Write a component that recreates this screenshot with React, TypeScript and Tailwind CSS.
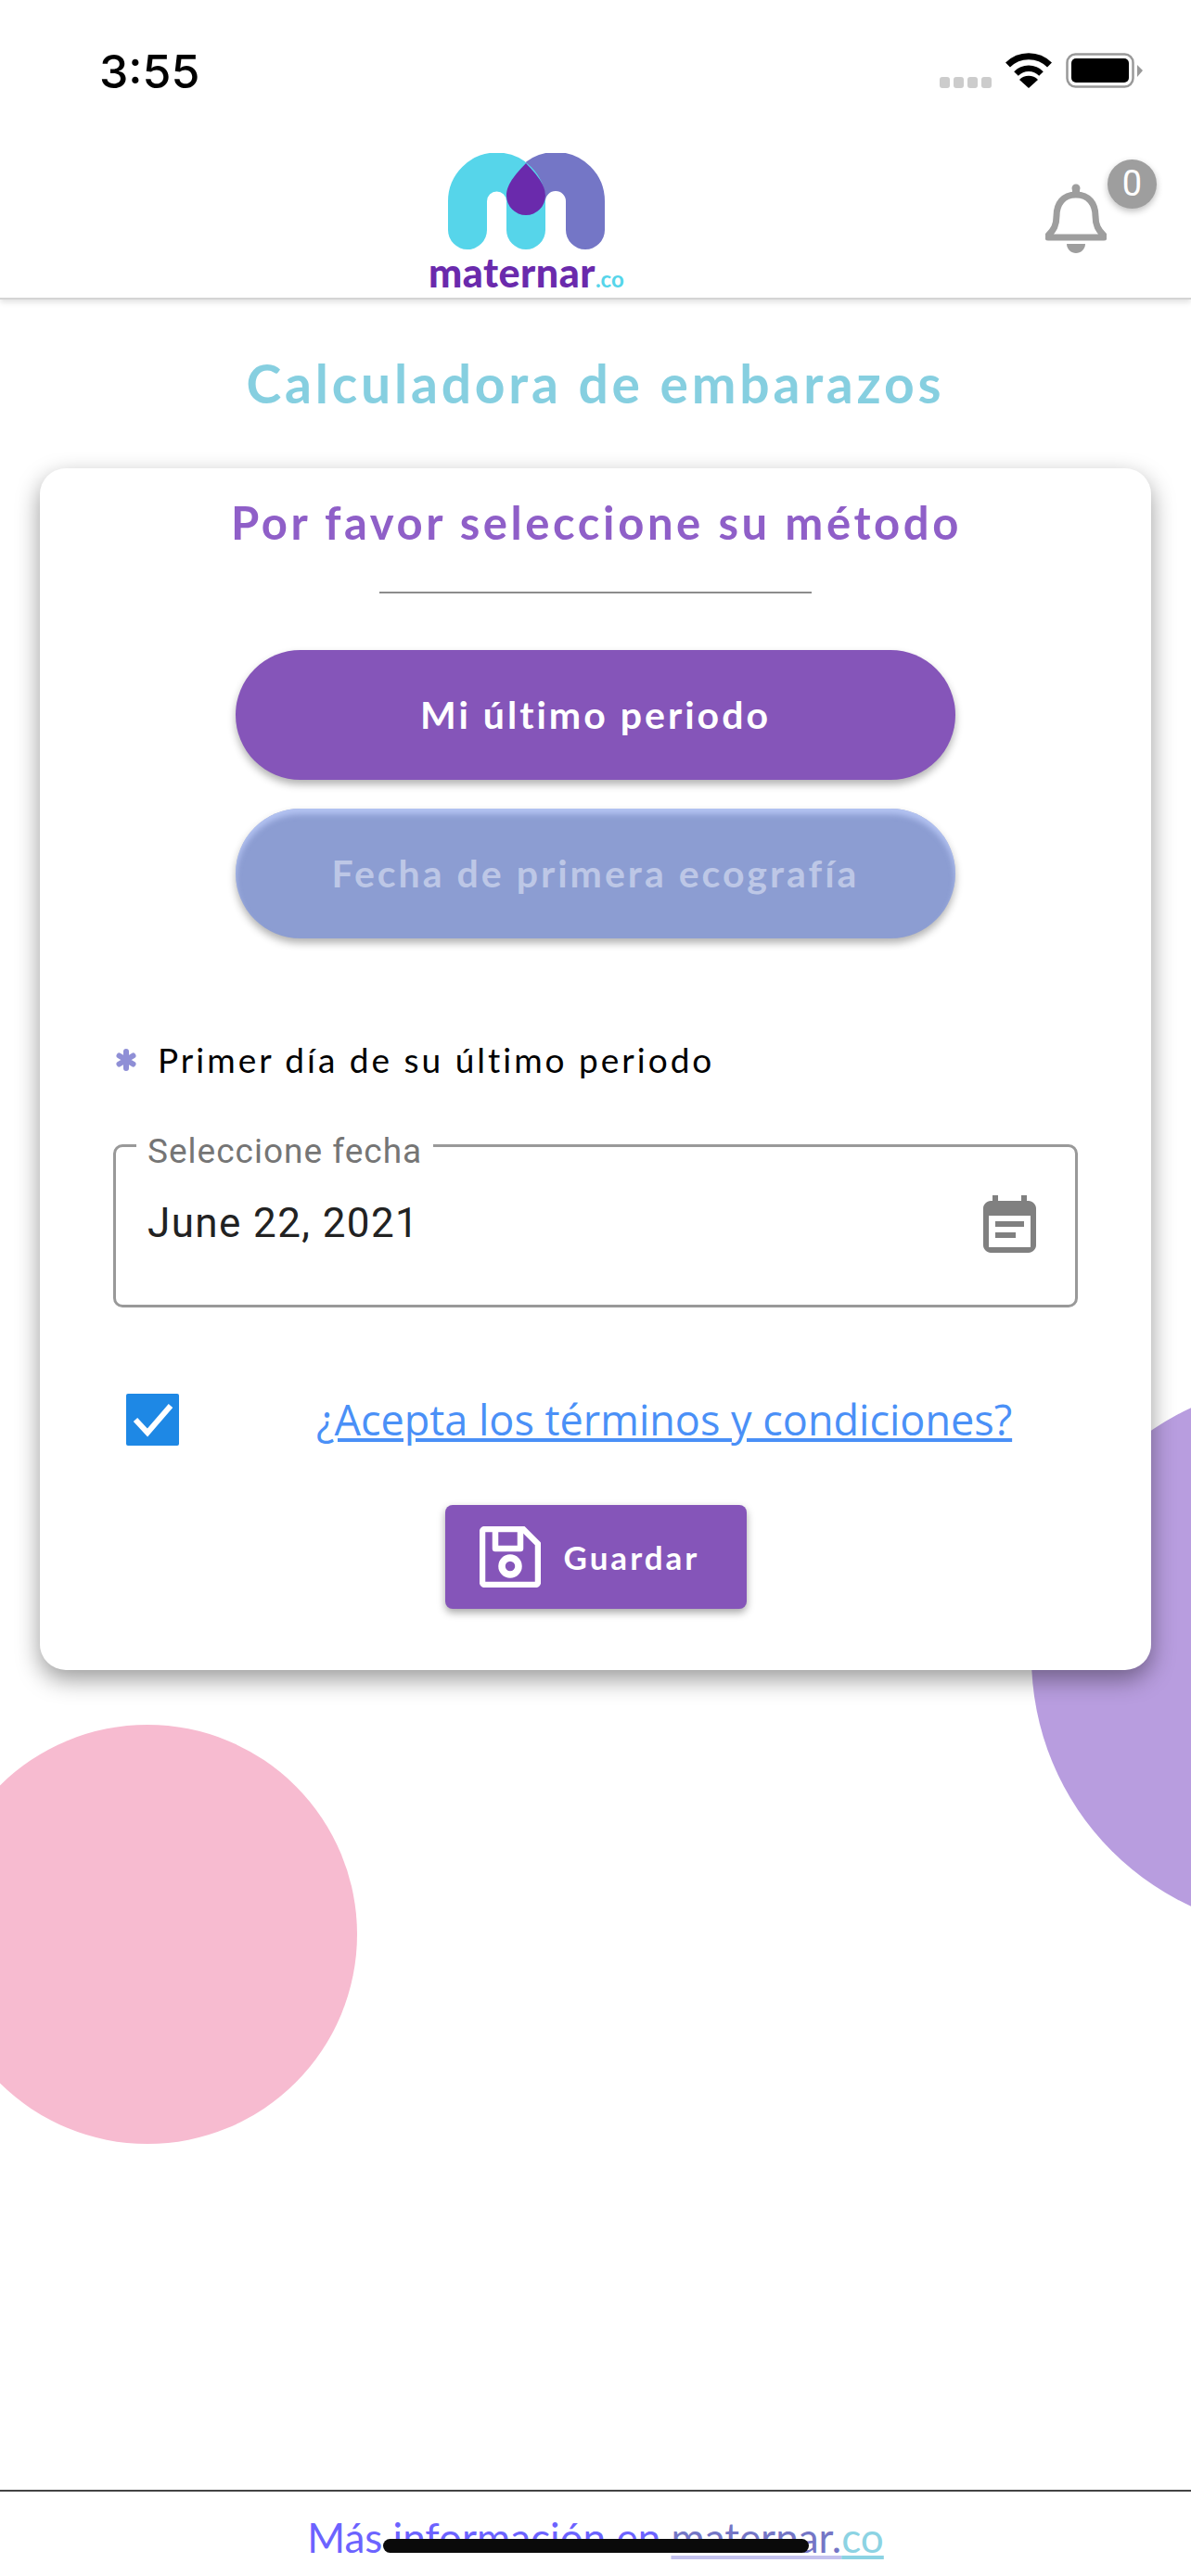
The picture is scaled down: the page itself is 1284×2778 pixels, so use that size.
import React from 'react';

const StatusBar: React.FC = () => (
  <div className="flex h-[148px] shrink-0 items-start justify-between pl-[107px] pr-[52px] pt-[49px]">
    <span className="font-['Inter'] text-[50px] leading-[56px] font-medium text-black">3:55</span>
    <div className="mt-[8px] flex items-start">
      <div className="mt-[26px] mr-[15px] flex gap-[4px]">
        <span className="h-[12px] w-[11px] rounded-[3px] bg-[#cccccc]" />
        <span className="h-[12px] w-[11px] rounded-[3px] bg-[#cccccc]" />
        <span className="h-[12px] w-[11px] rounded-[3px] bg-[#cccccc]" />
        <span className="h-[12px] w-[11px] rounded-[3px] bg-[#cccccc]" />
      </div>
      <svg className="mr-[15px] h-[38px] w-[50px]" viewBox="0 0 50 38">
        <path d="M25 38 L15 29 A14 14 0 0 1 35 29 Z" fill="#000" />
        <path d="M11.5 22.5 A19 19 0 0 1 38.5 22.5" fill="none" stroke="#000" strokeWidth="6.5" />
        <path d="M2.5 13 A32 32 0 0 1 47.5 13" fill="none" stroke="#000" strokeWidth="7" />
      </svg>
      <svg className="h-[38px] w-[83px]" viewBox="0 0 83 38">
        <rect x="1.5" y="1.5" width="71" height="35" rx="9" fill="none" stroke="#999" strokeWidth="2.5" />
        <rect x="6" y="6" width="62" height="26" rx="5" fill="#000" />
        <path d="M77 13 L83 19 L77 26 Z" fill="#999" />
      </svg>
    </div>
  </div>
);

const Logo: React.FC = () => (
  <div className="flex flex-col items-center">
    <svg className="ml-[2px] h-[105px] w-[170px]" viewBox="0 0 170 105">
      <path d="M84 52 A32 32 0 0 1 148 52 V83" fill="none" stroke="#7476c6" strokeWidth="42" strokeLinecap="round" />
      <path d="M21 83 V52 A31.5 31.5 0 0 1 84 52 V83" fill="none" stroke="#56d5ea" strokeWidth="42" strokeLinecap="round" />
      <path d="M84 11 C92 20 105 32 105 46 A21 21 0 0 1 63 46 C63 32 76 20 84 11 Z" fill="#6a2aac" />
    </svg>
    <div className="mt-[6px] flex items-baseline font-['Lato'] leading-[36px]">
      <span className="text-[43px] font-black tracking-[0.5px] text-[#6a2aac]">maternar</span>
      <span className="text-[24px] font-bold text-[#56d5ea]">.co</span>
    </div>
  </div>
);

const BellBadge: React.FC = () => (
  <div className="relative h-[101px] w-[120px]">
    <svg className="absolute left-0 top-[26px] h-[75px] w-[66px]" viewBox="0 0 66 75" fill="none" stroke="#9e9e9e" strokeWidth="7" strokeLinejoin="round">
      <path d="M33 12 C19 12 12 22 12 35 C12 45 9 50 3 56 L3 58 H63 V56 C57 50 54 45 54 35 C54 22 47 12 33 12 Z" />
      <circle cx="33" cy="5" r="4.5" fill="#9e9e9e" stroke="none" />
      <rect x="29" y="5" width="8" height="8" fill="#9e9e9e" stroke="none" />
      <path d="M23 65 H43 C43 71 38 75 33 75 C28 75 23 71 23 65 Z" fill="#9e9e9e" stroke="none" />
    </svg>
    <span className="absolute left-[67px] top-0 flex h-[53px] w-[53px] items-center justify-center rounded-full bg-[#9e9e9e] font-['Roboto'] text-[38px] text-white shadow-[0_3px_7px_rgba(0,0,0,0.25)]">
      0
    </span>
  </div>
);

const MethodButton: React.FC<{ label: string; active?: boolean }> = ({ label, active }) => (
  <button
    className={
      active
        ? "flex h-[140px] w-[776px] items-center justify-center rounded-[70px] bg-[#8555b9] font-['Lato'] text-[41px] font-bold tracking-[3px] text-white shadow-[0_5px_8px_rgba(0,0,0,0.3)]"
        : "flex h-[140px] w-[776px] items-center justify-center rounded-[70px] bg-[#8c9dd2] font-['Lato'] text-[41px] font-bold tracking-[3px] text-[#bdc7e6] shadow-[0_5px_8px_rgba(0,0,0,0.3),inset_0_6px_6px_rgba(190,205,250,0.8)]"
    }
  >
    {label}
  </button>
);

const App: React.FC = () => {
  return (
    <div className="relative flex h-[2778px] w-[1284px] flex-col overflow-hidden bg-white">
      {/* background circles */}
      <div className="absolute left-[-67px] top-[1860px] h-[452px] w-[452px] rounded-full bg-[#f7bbd0]" />
      <div className="absolute left-[1112px] top-[1491px] h-[592px] w-[592px] rounded-full bg-[#b89ddf]" />

      <header className="relative h-[323px] shrink-0 border-b-[2px] border-[#d4d4d4] bg-white shadow-[0_3px_6px_rgba(0,0,0,0.12)]">
        <StatusBar />
        <div className="flex items-start justify-between pl-[462px] pr-[37px]">
          <div className="mt-[17px]">
            <Logo />
          </div>
          <div className="mt-[24px]">
            <BellBadge />
          </div>
        </div>
      </header>

      <main className="relative flex flex-col items-center">
        <h1 className="mt-[57px] font-['Lato'] text-[57px] leading-[66px] font-bold tracking-[3.8px] text-[#86cfe0]">
          Calculadora de embarazos
        </h1>

        <section className="mx-[43px] mt-[59px] flex h-[1296px] w-[1198px] flex-col items-center rounded-[28px] bg-white shadow-[0_10px_26px_rgba(0,0,0,0.4)]">
          <h2 className="mt-[30px] ml-[2px] font-['Lato'] text-[49px] leading-[56px] font-bold tracking-[3.6px] text-[#8f5fc8]">
            Por favor seleccione su método
          </h2>
          <div className="mt-[47px] h-[2px] w-[466px] bg-[#8c8c8c]" />

          <div className="mt-[61px] flex flex-col gap-[31px]">
            <MethodButton label="Mi último periodo" active />
            <MethodButton label="Fecha de primera ecografía" />
          </div>

          <div className="mt-[109px] flex w-full items-center pl-[81px]">
            <svg className="h-[24px] w-[24px]" viewBox="0 0 24 24" stroke="#8f8fd6" strokeWidth="6" strokeLinecap="round">
              <path d="M12 3 V21 M4.5 7.5 L19.5 16.5 M19.5 7.5 L4.5 16.5" />
            </svg>
            <span className="ml-[22px] font-['Lato'] text-[37px] leading-[44px] tracking-[3px] text-black">
              Primer día de su último periodo
            </span>
          </div>

          <div className="relative mt-[69px] ml-[79px] flex h-[176px] w-[1040px] items-start justify-between self-start rounded-[10px] border-[3px] border-[#999999] pt-[47px] pl-[34px] pr-[42px]">
            <span className="absolute left-[22px] top-[-14px] bg-white px-[12px] font-['Roboto'] text-[37px] leading-[38px] tracking-[1px] text-[#757575]">
              Seleccione fecha
            </span>
            <span className="font-['Roboto'] text-[44px] leading-[70px] tracking-[1.4px] text-[#222222]">June 22, 2021</span>
            <svg className="mt-[5px] h-[62px] w-[57px]" viewBox="0 0 57 62">
              <path d="M13 0 V8 M44 0 V8" stroke="#808080" strokeWidth="6" />
              <path d="M8 6 H49 C53 6 57 10 57 14 V54 C57 58 53 62 49 62 H8 C4 62 0 58 0 54 V14 C0 10 4 6 8 6 Z M6 22 V56 H51 V22 Z" fill="#808080" fillRule="evenodd" />
              <rect x="13" y="28" width="31" height="6" fill="#808080" />
              <rect x="13" y="40" width="22" height="6" fill="#808080" />
            </svg>
          </div>

          <div className="mt-[93px] flex w-full items-center pl-[93px]">
            <span className="flex h-[56px] w-[57px] items-center justify-center rounded-[2px] bg-[#1e88e5]">
              <svg className="h-[40px] w-[44px]" viewBox="0 0 44 40" fill="none" stroke="#fff" strokeWidth="6">
                <path d="M3 20 L16 34 L41 5" />
              </svg>
            </span>
            <a className="ml-[148px] font-['Open_Sans'] text-[45px] leading-[56px] text-[#4a90f7] underline">
              ¿Acepta los términos y condiciones?
            </a>
          </div>

          <button className="mt-[64px] flex h-[112px] w-[325px] items-center rounded-[8px] bg-[#8555b9] pl-[37px] shadow-[0_4px_8px_rgba(0,0,0,0.35)]">
            <svg className="h-[66px] w-[66px]" viewBox="0 0 66 66" fill="none" stroke="#fff" strokeWidth="6.5" strokeLinejoin="round">
              <path d="M6 3 H47 L63 19 V60 A3 3 0 0 1 60 63 H6 A3 3 0 0 1 3 60 V6 A3 3 0 0 1 6 3 Z" />
              <path d="M17 3 V24 H44 V3" />
              <circle cx="33" cy="43" r="9" strokeWidth="7.5" />
            </svg>
            <span className="ml-[25px] font-['Lato'] text-[35px] font-bold tracking-[3px] text-white">Guardar</span>
          </button>
        </section>
      </main>

      <footer className="relative mt-auto flex h-[93px] shrink-0 justify-center border-t-[2px] border-[#444444] bg-white pt-[22px] font-['Lato'] text-[44px] leading-[54px] text-[#6c63ff]">
        <span>Más información en&nbsp;</span>
        <span className="text-[#7476c6] underline decoration-[#c4c2ee]">maternar.</span>
        <span className="text-[#8cd3e3] underline">co</span>
      </footer>

      {/* home indicator */}
      <div className="absolute left-[413px] top-[2738px] h-[15px] w-[459px] rounded-full bg-[#0a0a0a]" />
    </div>
  );
};

export default App;
